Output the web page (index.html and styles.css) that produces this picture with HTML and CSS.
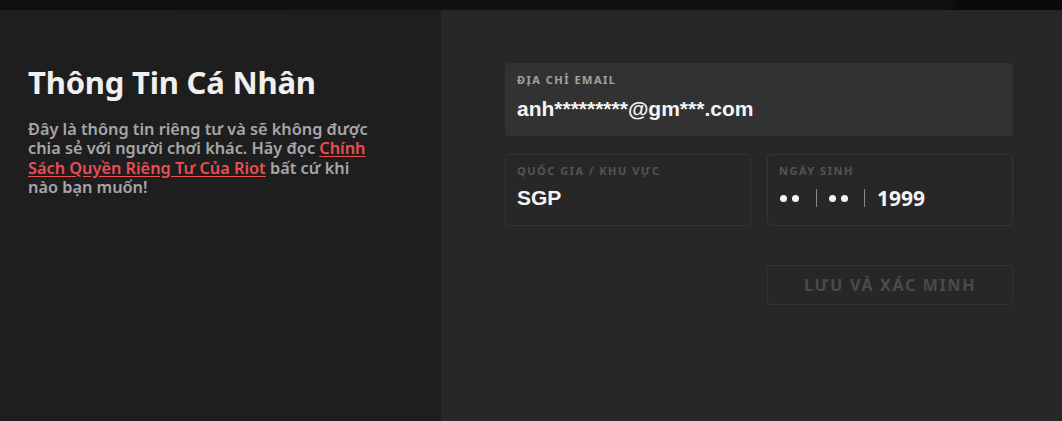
FILE: index.html
```html
<!DOCTYPE html>
<html lang="vi">
<head>
<meta charset="utf-8">
<link rel="stylesheet" href="styles.css">
</head>
<body>
<div class="topbar"></div>
<div class="main">
  <section class="intro">
    <h1 class="title">Thông Tin Cá Nhân</h1>
    <p class="desc">Đây là thông tin riêng tư và sẽ không được chia sẻ với người chơi khác. Hãy đọc <a class="link" href="#">Chính Sách Quyền Riêng Tư Của Riot</a> bất cứ khi nào bạn muốn!</p>
  </section>
  <section class="form">
    <div class="field field-filled">
      <div class="label">ĐỊA CHỈ EMAIL</div>
      <div class="value">anh*********@gm***.com</div>
    </div>
    <div class="row">
      <div class="field field-outline">
        <div class="label label-dim">QUỐC GIA / KHU VỰC</div>
        <div class="value">SGP</div>
      </div>
      <div class="field field-outline">
        <div class="label label-dim">NGÀY SINH</div>
        <div class="value date">
          <span class="dots"><i class="dot"></i><i class="dot"></i></span>
          <span class="sep"></span>
          <span class="dots"><i class="dot"></i><i class="dot"></i></span>
          <span class="sep sep-2"></span>
          <span class="year">1999</span>
        </div>
      </div>
    </div>
    <div class="actions">
      <button class="btn">LƯU VÀ XÁC MINH</button>
    </div>
  </section>
</div>
</body>
</html>
```
FILE: styles.css
```css
html, body {
  margin: 0;
  padding: 0;
  height: 100%;
  background: #282728;
  overflow: hidden;
}
body {
  font-family: "Noto Sans", "Open Sans", sans-serif;
}
.topbar {
  height: 10px;
  background: linear-gradient(120deg, #101010 0%, #111111 89%, #0a0a0a 90%, #0a0a0a 100%);
}
.main {
  display: flex;
  height: 411px;
}
.intro {
  width: 441px;
  box-sizing: border-box;
  background: #1f1e1f;
  padding: 51px 40px 0 28px;
}
.title {
  margin: 0;
  font-size: 31px;
  font-weight: 700;
  color: #f0f0f0;
  line-height: 42px;
  letter-spacing: -0.2px;
}
.desc {
  margin: 17px 0 0;
  font-size: 16.3px;
  font-weight: 600;
  line-height: 19.4px;
  color: #a6a6a6;
  width: 350px;
}
.link {
  color: #eb4d52;
  text-decoration: underline;
  text-underline-offset: 2px;
}
.form {
  flex: 1;
  padding: 53px 0 0 64px;
  box-sizing: border-box;
}
.form > * {
  width: 508px;
}
.field {
  box-sizing: border-box;
  border-radius: 4px;
  padding: 9px 12px 0 12px;
}
.field-filled {
  background: #333233;
  height: 73px;
}
.field-outline {
  border: 1px solid #353436;
  height: 72px;
  padding: 8px 11px 0 11px;
}
.row {
  display: grid;
  grid-template-columns: 1fr 1fr;
  gap: 16px;
  margin-top: 18px;
}
.label {
  font-size: 11px;
  font-weight: 700;
  letter-spacing: 1.5px;
  color: #a2a2a2;
  line-height: 16px;
}
.label-dim {
  color: #545355;
}
.value {
  margin-top: 9px;
  font-family: "Liberation Sans", Arial, sans-serif;
  font-weight: 700;
  font-size: 21px;
  line-height: 24px;
  color: #f4f4f4;
}
.field-outline .value {
  margin-top: 7px;
}
.date {
  display: flex;
  align-items: center;
  padding-left: 1px;
}
.dots {
  display: flex;
  gap: 5px;
}
.dot {
  display: block;
  width: 7px;
  height: 7px;
  border-radius: 50%;
  background: #f4f4f4;
}
.sep {
  width: 1px;
  height: 18px;
  background: #8a8a8a;
  margin: 0 12px 0 17px;
}
.sep-2 {
  margin-left: 16px;
}
.year {
  font-family: "Noto Sans", sans-serif;
  font-weight: 700;
  font-size: 21px;
}
.actions {
  display: flex;
  justify-content: flex-end;
  margin-top: 39px;
}
.btn {
  width: 246px;
  height: 40px;
  background: transparent;
  border: 1px solid #333234;
  border-radius: 3px;
  font-family: "Noto Sans", sans-serif;
  font-weight: 700;
  font-size: 16px;
  letter-spacing: 1.7px;
  color: #4b4a4c;
}
```
